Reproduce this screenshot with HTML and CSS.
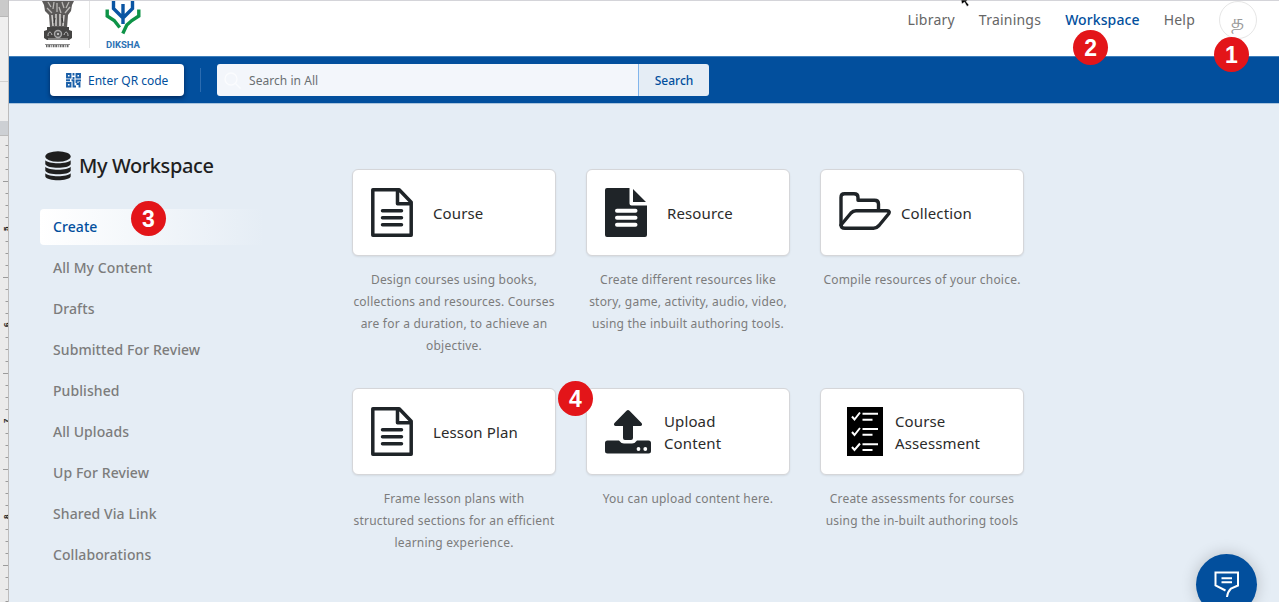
FILE: index.html
```html
<!DOCTYPE html>
<html lang="en">
<head>
<meta charset="utf-8">
<title>My Workspace</title>
<link rel="stylesheet" href="styles.css">
</head>
<body>
<div class="screen">
  <aside class="ruler">
    <div class="ruler-top"></div>
    <div class="ruler-mid"></div>
    <div class="ruler-corner"></div>
    <div class="ruler-scale">
      <svg width="9" height="466" viewBox="0 136 9 466">
        <defs>
          <pattern id="minor" width="9" height="12" patternUnits="userSpaceOnUse" y="1"><rect x="5.5" y="0" width="3" height="1" fill="#9b9b9b"/></pattern>
          <pattern id="major" width="9" height="96" patternUnits="userSpaceOnUse" y="85"><rect x="3" y="0" width="6" height="1" fill="#9b9b9b"/></pattern>
        </defs>
        <rect y="136" width="9" height="466" fill="url(#minor)"/>
        <rect y="136" width="9" height="466" fill="url(#major)"/>
        <g class="ruler-num">
          <text transform="translate(8.5 231) rotate(-90)">5</text>
          <text transform="translate(8.5 327) rotate(-90)">6</text>
          <text transform="translate(8.5 423) rotate(-90)">7</text>
          <text transform="translate(8.5 519) rotate(-90)">8</text>
        </g>
      </svg>
    </div>
  </aside>

  <div class="app">
    <header class="header">
      <div class="logos">
        <svg class="emblem" width="36" height="48" viewBox="0 0 36 48">
          <path d="M2 0h32l-2 4-1 6-3 4-1 13H10L9 14l-4-4-1-6z" fill="#5c5a59"/>
          <path d="M8 1l3 5M14 1l-1 7M22 1l2 6M29 1l-3 6M7 7l5 5M30 6l-5 6M17 2v9M19 6l2 6" stroke="#b9b7b5" stroke-width="1.3" fill="none"/>
          <path d="M12 14l1 11M16 13v12M20 13v12M24 14l-1 11" stroke="#d4d2d0" stroke-width="1.5"/>
          <path d="M15 17l-1 5M22 17l1 5" stroke="#333" stroke-width="1"/>
          <path d="M7 26h22v3l3 1v7l-3 2H7l-3-2v-7l3-1z" fill="#454443"/>
          <circle cx="18" cy="33" r="4.2" fill="#aaa"/><circle cx="18" cy="33" r="2.8" fill="#555"/><circle cx="18" cy="33" r="1" fill="#ddd"/>
          <path d="M8 35c0-5 3-5 4-1M28 35c0-5-3-5-4-1M8 38h20" stroke="#bbb" fill="none"/>
          <path d="M5 43.500h25" stroke="#777" stroke-width=".8"/>
          <path d="M6 45h23" stroke="#666" stroke-width="2.500" stroke-dasharray="1.500 .8 2 1 1 .7"/>
        </svg>
        <div class="logo-line"></div>
        <div class="diksha">
          <svg width="36" height="34" viewBox="0 0 36 34" fill="none" stroke-width="3.400">
            <path d="M2.200 8.500v6.500l7 4.500 5.500 7M33.800 8.500v6.500l-7 4.500-5 4.500-4 8.500" stroke="#0e9347"/>
            <path d="M8.500 0v7.500L18 17l9.500-9.500V0M18 3v20" stroke="#0a55a3"/>
          </svg>
          <div class="diksha-name">DIKSHA</div>
        </div>
      </div>
      <nav class="nav">
        <a>Library</a><a>Trainings</a>
        <a class="active">Workspace<span class="step step-2">2</span></a>
        <a>Help</a>
        <div class="avatar">த<span class="step step-1">1</span></div>
      </nav>
      <svg class="cursor" width="10" height="7" viewBox="0 0 10 7"><path d="M0 0h7L5 1.500 8 5 6 6.500 3.500 2 1 4z" fill="#000" stroke="#fff" stroke-width=".5"/></svg>
    </header>

    <div class="searchbar">
      <button class="qr">
        <svg width="15" height="15" viewBox="0 0 15 15" fill="none" stroke="#1a5fa8" stroke-width="1.900">
          <path d="M1 1h3.500v3.500H1zM10.500 1H14v3.500h-3.500zM1 10h3.500v3.500H1zM7.500 0v2.500M7.500 4v2M0 7.200h4M5.500 7.200h3M7.500 7.500v6h2.500M10.500 10V7.500H15M13.500 9v5.500M10.500 11h3"/>
        </svg>
        <span>Enter QR code</span>
      </button>
      <div class="bar-line"></div>
      <div class="search">
        <div class="field">
          <svg width="17" height="17" viewBox="0 0 17 17" fill="none" stroke="#fbfcfe" stroke-width="1.300"><circle cx="7" cy="7" r="6"/><path d="M11.500 11.500l5 5"/></svg>
          <span>Search in All</span>
        </div>
        <button class="go">Search</button>
      </div>
    </div>

    <main class="main">
      <section class="side">
        <h1 class="title">
          <svg width="26" height="30" viewBox="0 0 26 30" fill="#1f1f1f">
            <ellipse cx="13" cy="5.500" rx="12.700" ry="5.200"/>
            <path d="M.3 9.200c3 4 22.400 4 25.400 0v4c-2 4.800-23.400 4.800-25.400 0z"/>
            <path d="M.3 15.700c3 4 22.400 4 25.400 0v4c-2 4.800-23.400 4.800-25.400 0z"/>
            <path d="M.3 22.200c3 4 22.400 4 25.400 0v3.300c-2 5-23.400 5-25.400 0z"/>
          </svg>
          <span>My Workspace</span>
        </h1>
        <ul class="menu">
          <li class="on">Create<span class="step step-3">3</span></li>
          <li>All My Content</li>
          <li>Drafts</li>
          <li>Submitted For Review</li>
          <li>Published</li>
          <li>All Uploads</li>
          <li>Up For Review</li>
          <li>Shared Via Link</li>
          <li>Collaborations</li>
        </ul>
      </section>

      <section class="grid">
        <article>
          <div class="card">
            <svg width="42" height="49" viewBox="0 0 42 49" fill="none" stroke="#1f2428" stroke-width="3.500" stroke-linejoin="round"><path d="M1.800 1.800h26.400l12 12.400v33H1.800zM26.500 1.800v14h13.700"/><path d="M11.500 22.800h19M11.500 29.800h19M11.500 36.800h19" stroke-linecap="round"/></svg>
            <span>Course</span>
          </div>
          <p>Design courses using books,<br>collections and resources. Courses<br>are for a duration, to achieve an<br>objective.</p>
        </article>
        <article>
          <div class="card">
            <svg width="42" height="49" viewBox="0 0 42 49" fill="#1f2428"><path d="M2 0h22.500v15.500q0 2 2 2H42V47q0 2-2 2H2q-2 0-2-2V2q0-2 2-2zM28 1l13 13H28z"/><path d="M12 22.800h18.500M12 29.800h18.500M12 36.800h18.500" stroke="#fff" stroke-width="4" stroke-linecap="round"/></svg>
            <span>Resource</span>
          </div>
          <p>Create different resources like<br>story, game, activity, audio, video,<br>using the inbuilt authoring tools.</p>
        </article>
        <article>
          <div class="card card-folder">
            <svg width="52" height="38" viewBox="0 0 52 38" fill="none" stroke="#1f2428" stroke-width="3.400" stroke-linejoin="round"><path d="M2 34V5.500Q2 1.800 5.500 1.800H15Q19 1.800 19 5.500V8.300H35.500Q39.500 8.300 39.500 12V18.500"/><path d="M2 33L12 21Q14 18.800 17 18.800H48Q51.500 19 49.500 22L40 33.500Q37.500 36.300 34.500 36.300H6Q2 36.300 2 33z"/></svg>
            <span>Collection</span>
          </div>
          <p>Compile resources of your choice.</p>
        </article>
        <article>
          <div class="card">
            <svg width="42" height="49" viewBox="0 0 42 49" fill="none" stroke="#1f2428" stroke-width="3.500" stroke-linejoin="round"><path d="M1.800 1.800h26.400l12 12.400v33H1.800zM26.500 1.800v14h13.700"/><path d="M11.500 22.800h19M11.500 29.800h19M11.500 36.800h19" stroke-linecap="round"/></svg>
            <span>Lesson Plan</span>
          </div>
          <p>Frame lesson plans with<br>structured sections for an efficient<br>learning experience.</p>
        </article>
        <article>
          <div class="card card-upload">
            <svg width="46" height="44" viewBox="0 0 46 44" fill="#1f2428"><path d="M21.500.8q1.500-1.500 3 0L36.500 13q1.500 2.500-1 3H28v12q0 2-2 2h-6q-2 0-2-2V16h-7.500q-2.500-.5-1-3z"/><path d="M2.500 30.500H14q2 3 5 3h8q3 0 5-3h11.500q2.500 0 2.500 2.500v8q0 2.500-2.500 2.500h-41Q0 43.500 0 41v-8q0-2.500 2.500-2.500z"/><circle cx="33.500" cy="39" r="1.900" fill="#fff"/><circle cx="40.300" cy="39" r="1.900" fill="#fff"/></svg>
            <span>Upload<br>Content</span><b class="step step-4">4</b>
          </div>
          <p>You can upload content here.</p>
        </article>
        <article>
          <div class="card card-check">
            <svg width="36" height="49" viewBox="0 0 36 49" fill="none" stroke="#fff" stroke-width="2"><path d="M0 0h36v49H0z" fill="#000" stroke="none"/><path d="M5 9.500l2.500 3L13 5.500M5 25l2.500 3L13 21M5 40l2.500 3L13 36.500"/><path d="M15.500 6.700H31M15.500 12.700h10M15.500 22H31M15.500 27.700h10M15.500 37.200H31M15.500 43h10"/></svg>
            <span>Course<br>Assessment</span>
          </div>
          <p>Create assessments for courses<br>using the in-built authoring tools</p>
        </article>
      </section>
    </main>
    <div class="chat">
      <svg width="26" height="27" viewBox="0 0 26 27" fill="none" stroke="#fff" stroke-width="2"><path d="M11.500 19.500L1.500 14.500V1.500h22.500v13l-7 3q-3.500 3.500-4 8.500"/><path d="M7.500 7.300h10.500M7.500 11.300h10.500"/></svg>
    </div>
  </div>
</div>
</body>
</html>
```

FILE: styles.css
```css
* { box-sizing: border-box; }
body { margin: 0; font-family: "Noto Sans", sans-serif; overflow: hidden; }
.screen { display: flex; width: 1279px; height: 602px; overflow: hidden; }

.ruler { width: 9px; flex: none; display: flex; flex-direction: column; background: #ebebeb; }
.ruler-top { height: 17px; background: #cacaca; border-bottom: 1px solid #b8b8b8; }
.ruler-mid { height: 104px; background: linear-gradient(#efefef 0 64px, #d0d0d0 64px 65px, #eee 65px); }
.ruler-corner { height: 15px; background: #cdd0d4; border-bottom: 1px solid #bbb; }
.ruler-scale svg { display: block; }
.ruler-num { font: bold 8px "Liberation Sans", sans-serif; fill: #222; }

.app { position: relative; flex: 1; display: flex; flex-direction: column; background: #e5edf5; box-shadow: -1px 0 0 #bdbcbc; }
.header { position: relative; height: 56px; background: #fff; border-top: 1px solid #d4d4d9; display: flex; justify-content: space-between; }
.logos { display: flex; padding-left: 31px; }
.logo-line { width: 1px; height: 47px; margin: 0 15px 0 13px; background: #e6e6e6; }
.diksha { width: 36px; }
.diksha svg { display: block; }
.diksha-name { margin-top: 3px; font: bold 9.500px/13px Roboto, sans-serif; color: #2c72b4; text-align: center; white-space: nowrap; }
.nav { display: flex; align-items: flex-start; gap: 24px; padding-right: 22px; font-size: 14px; line-height: 38px; color: #666; letter-spacing: .22px; }
.nav a { position: relative; }
.nav .active { color: #024f9d; font-weight: 500; letter-spacing: .1px; }
.avatar { position: relative; width: 38px; height: 38px; border: 1px solid #e6e6e6; border-radius: 50%; text-align: center; color: #999; font-size: 20px; line-height: 37px; }
.cursor { position: absolute; left: 952px; top: -1px; }

.step { position: absolute; width: 35px; height: 35px; border-radius: 50%; background: #e31519; color: #fff; font: bold 23px/36px "Liberation Sans", sans-serif; text-align: center; letter-spacing: 0; z-index: 3; }
.step-1 { left: -6px; top: 35px; }
.step-2 { left: 8px; top: 29px; }
.step-3 { left: 91px; top: -8px; }
.step-4 { left: -29px; top: -8px; }

.searchbar { height: 48px; background: #024f9d; border-top: 1px solid #3f7fbb; border-bottom: 1px solid #a9c4dd; display: flex; align-items: center; padding-left: 41px; }
button { border: 0; font-family: inherit; }
.qr { width: 134px; height: 32px; padding: 1px 0 0 16px; border-radius: 4px; background: #fff; box-shadow: 0 2px 4px rgba(0,15,50,.6); color: #024f9d; font-size: 12px; display: flex; align-items: center; gap: 7px; white-space: nowrap; }
.bar-line { width: 1px; height: 24px; margin: 0 16px; background: #2c6cb0; }
.search { display: flex; width: 492px; height: 32px; border-radius: 3px; overflow: hidden; }
.field { flex: 1; display: flex; align-items: center; gap: 8px; padding: 1px 0 0 7px; background: #f3f6fb; color: #6a6f72; font-size: 12px; letter-spacing: .05px; }
.go { width: 71px; padding: 1px 0 0; border-left: 1px solid #82b5ec; background: #e5edf5; color: #024f9d; font-size: 12px; font-weight: 500; }

.main { display: flex; }
.side { width: 343px; padding: 46px 0 0 31px; }
.title { display: flex; align-items: center; gap: 8px; height: 32px; margin: 0; padding-left: 5px; color: #1f1f1f; font-size: 20px; font-weight: 500; line-height: 32px; letter-spacing: -.4px; }
.menu { margin: 27px 0 0; padding: 0; list-style: none; display: flex; flex-direction: column; gap: 5px; }
.menu li { position: relative; width: 224px; height: 36px; padding-left: 13px; border-radius: 4px; font-size: 14px; font-weight: 500; line-height: 36px; letter-spacing: .08px; color: #7c7c7c; }
.menu .on { color: #024f9d; background: linear-gradient(90deg, #fff, #e5edf5); }

.grid { display: grid; grid-template-columns: repeat(3, 204px); grid-template-rows: 188px auto; column-gap: 30px; row-gap: 31px; padding-top: 65px; }
.card { position: relative; height: 87px; display: flex; align-items: center; gap: 20px; padding-left: 18px; background: #fff; border: 1px solid #d5d6d9; border-radius: 6px; box-shadow: 0 1px 2px rgba(0,0,0,.08); color: #2b2b2b; font-size: 15px; line-height: 22px; letter-spacing: .12px; }
.card span { padding-top: 1px; }
.card-folder { gap: 10px; padding-bottom: 3px; }
.card-folder span { padding-top: 4px; }
.card-upload { gap: 13px; }
.card-check { padding-left: 26px; gap: 12px; }
article p { margin: 13px -10px 0; text-align: center; white-space: nowrap; color: #7c7c7c; font-size: 12px; line-height: 22px; letter-spacing: .21px; }

.chat { position: absolute; left: 1187px; top: 554px; width: 61px; height: 61px; border-radius: 50%; background: #024f9d; box-shadow: 0 0 16px rgba(0,0,0,.2); display: flex; justify-content: center; padding-top: 17px; }
```
